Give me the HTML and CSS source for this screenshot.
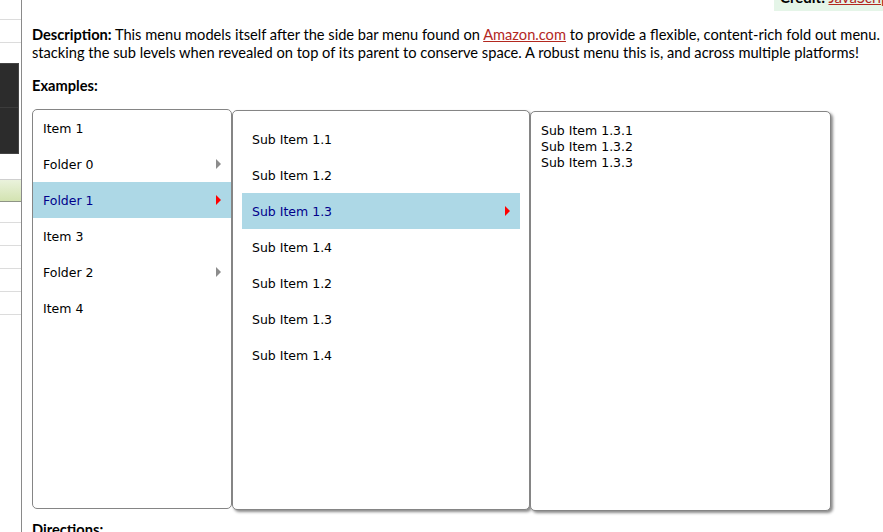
FILE: index.html
```html
<!DOCTYPE html>
<html lang="en">
<head>
<meta charset="utf-8">
<title>Side Bar Fold Out Menu</title>
<link rel="stylesheet" href="styles.css">
</head>
<body>
<div class="page">
  <aside class="sidebar">
    <div class="sb-row sb-row-top"></div>
    <div class="sb-row sb-row-second"></div>
    <div class="sb-gap"></div>
    <div class="sb-dark"><div class="sb-dark-line"></div></div>
    <div class="sb-gap2"></div>
    <div class="sb-green"></div>
    <div class="sb-row sb-row-first"></div>
    <div class="sb-row"></div>
    <div class="sb-row"></div>
    <div class="sb-row"></div>
    <div class="sb-row"></div>
  </aside>
  <main class="main">
    <div class="credit-bar">
      <div class="credit"><span class="credit-text"><b>Credit:</b> <a href="#" class="red-link">JavaScript Kit</a></span></div>
    </div>
    <p class="desc"><b>Description:</b> This menu models itself after the side bar menu found on <a href="#" class="red-link">Amazon.com</a> to provide a flexible, content-rich fold out menu. stacking the sub levels when revealed on top of its parent to conserve space. A robust menu this is, and across multiple platforms!</p>
    <p class="label">Examples:</p>
    <div class="menus">
      <ul class="panel panel-main">
        <li class="item">Item 1</li>
        <li class="item">Folder 0<span class="arrow"></span></li>
        <li class="item active">Folder 1<span class="arrow"></span></li>
        <li class="item">Item 3</li>
        <li class="item">Folder 2<span class="arrow"></span></li>
        <li class="item">Item 4</li>
      </ul>
      <ul class="panel panel-sub">
        <li class="item">Sub Item 1.1</li>
        <li class="item">Sub Item 1.2</li>
        <li class="item active">Sub Item 1.3<span class="arrow"></span></li>
        <li class="item">Sub Item 1.4</li>
        <li class="item">Sub Item 1.2</li>
        <li class="item">Sub Item 1.3</li>
        <li class="item">Sub Item 1.4</li>
      </ul>
      <div class="panel panel-content">
        <div>Sub Item 1.3.1</div>
        <div>Sub Item 1.3.2</div>
        <div>Sub Item 1.3.3</div>
      </div>
    </div>
    <p class="label label-directions">Directions:</p>
  </main>
</div>
</body>
</html>
```

FILE: styles.css
```css
html, body {
  margin: 0;
  padding: 0;
  background: #fff;
  overflow: hidden;
}

.page {
  display: flex;
  height: 532px;
}

/* ---------- left sidebar (cut-off navigation) ---------- */
.sidebar {
  width: 21px;
  flex: none;
  border-right: 1px solid #8a8a8a;
}

.sb-row {
  height: 22px;
  border-bottom: 1px solid #dcdcdc;
}

.sb-row-top {
  height: 19px;
}

.sb-row-first {
  height: 20px;
}

.sb-gap {
  height: 20px;
}

.sb-dark {
  width: 19px;
  height: 91px;
  background: #2c2c2c;
  box-sizing: border-box;
  border: 1px solid #444;
  border-left: none;
  padding-top: 43px;
}

.sb-dark-line {
  height: 1px;
  background: #3c3c3c;
}

.sb-gap2 {
  height: 25px;
  border-bottom: 1px solid #cfcfcf;
}

.sb-green {
  height: 21px;
  background: linear-gradient(#eaf2dc, #d3e3b1);
  border-bottom: 1px solid #8e9486;
}

/* ---------- main content ---------- */
.main {
  flex: none;
  width: 860px;
  padding-left: 10px;
  font-family: "Lato", "Liberation Sans", sans-serif;
  font-size: 14.65px;
  color: #000;
}

.credit-bar {
  display: flex;
  height: 11px;
  padding-left: 742px;
}

.credit {
  height: 11px;
  overflow: hidden;
  padding: 0 6px;
  background: #e5f5e8;
}

.credit-text {
  display: block;
  margin-top: -13px;
  line-height: 20px;
  font-size: 15px;
  white-space: nowrap;
}

.red-link {
  color: #b3281f;
  text-decoration: underline;
}

.desc {
  margin: 15px 0 0;
  line-height: 18px;
}

.label {
  margin: 15px 0 0;
  line-height: 18px;
  font-weight: bold;
}

.label-directions {
  margin-top: 10px;
}

/* ---------- fold out menu ---------- */
.menus {
  display: flex;
  align-items: flex-start;
  margin-top: 14px;
  font-family: "DejaVu Sans", "Liberation Sans", sans-serif;
  font-size: 12.5px;
}

.panel {
  list-style: none;
  margin: 0;
  box-sizing: border-box;
  height: 400px;
  background: #fff;
  border: 1px solid #858585;
  border-radius: 5px;
}

.panel-main {
  width: 200px;
  padding: 0;
}

.panel-sub {
  width: 298px;
  margin-top: 1px;
  padding: 10px 9px;
  box-shadow: 2px 2px 3px #8a8a8a;
}

.panel-content {
  width: 301px;
  margin-top: 2px;
  padding: 11px 10px 10px;
  line-height: 16px;
  box-shadow: 2px 2px 3px #8a8a8a;
}

.item {
  height: 36px;
  display: flex;
  align-items: center;
  justify-content: space-between;
  padding: 0 10px;
}

.item.active {
  background: #add8e6;
  color: #00008b;
}

.arrow {
  width: 0;
  height: 0;
  border-left: 5px solid #8c8c8c;
  border-top: 5px solid transparent;
  border-bottom: 5px solid transparent;
}

.item.active .arrow {
  border-left-color: #ff0000;
}
```
